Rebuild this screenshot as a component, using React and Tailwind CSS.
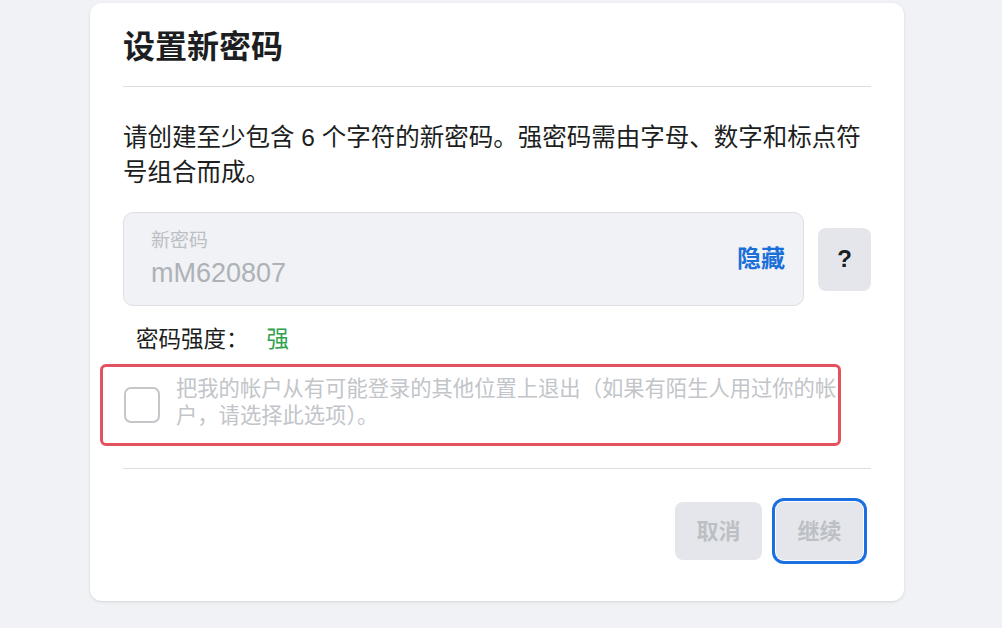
export default function App() {
  const font = { fontFamily: '"Liberation Sans","Noto Sans CJK SC",sans-serif' };
  return (
    <div className="w-[1002px] h-[628px] bg-[#f0f2f5] overflow-hidden" style={font}>
      <div className="ml-[90px] mt-[3px] w-[814px] h-[598px] bg-white rounded-[12px] shadow-[0_1px_3px_rgba(0,0,0,0.12)] px-[33px] pt-[22px] flex flex-col">
        <h1 className="text-[32px] leading-[44px] font-bold text-[#1c1e21]">设置新密码</h1>
        <div className="mt-[17px] h-px bg-[#dadde1]" />
        <p className="mt-[33px] text-[24.5px] leading-[35px] text-[#1c1e21] whitespace-nowrap">
          请创建至少包含 6 个字符的新密码。强密码需由字母、数字和标点符
          <br />
          号组合而成。
        </p>
        <div className="mt-[22px] flex items-center gap-[14px]">
          <div className="w-[681px] h-[94px] rounded-[10px] bg-[#f0f2f5] border border-[#dddfe2] flex items-center pl-[27px] pr-[18px]">
            <div className="flex-1 flex flex-col">
              <span className="text-[19px] leading-[22px] text-[#bcc0c4]">新密码</span>
              <span className="mt-[6px] text-[27px] leading-[30px] text-[#aeb1b5]">mM620807</span>
            </div>
            <span className="text-[24px] font-bold text-[#1a6fd9]">隐藏</span>
          </div>
          <div className="w-[53px] h-[63px] rounded-[8px] bg-[#e4e6eb] flex items-center justify-center text-[24px] font-bold text-[#1c1e21]">?</div>
        </div>
        <div className="mt-[19px] ml-[13px] flex items-center h-[30px] text-[22.5px]">
          <span className="text-[#1c1e21]">密码强度：</span>
          <span className="ml-[18px] text-[#31a24c]">强</span>
        </div>
        <div className="mt-[9px] ml-[-23px] w-[741px] h-[82px] border-[3px] border-[#e4525f] rounded-[6px] flex items-center pl-[21px] pr-[2px]">
          <div className="w-[36px] h-[36px] rounded-[7px] border-2 border-[#c4c6ca] shrink-0" />
          <p className="ml-[16px] text-[21.3px] leading-[27px] text-[#c2c5c9] whitespace-nowrap -mt-[4px]">
            把我的帐户从有可能登录的其他位置上退出（如果有陌生人用过你的帐
            <br />
            户，请选择此选项）。
          </p>
        </div>
        <div className="mt-[22px] h-px bg-[#dadde1]" />
        <div className="mt-[33px] mr-[8px] flex justify-end gap-[14px]">
          <div className="w-[87px] h-[58px] rounded-[8px] bg-[#e4e6eb] flex items-center justify-center text-[22px] font-bold text-[#bcc0c4]">取消</div>
          <div className="w-[87px] h-[58px] rounded-[8px] bg-[#e4e6eb] flex items-center justify-center text-[22px] font-bold text-[#bcc0c4] ring-[3px] ring-[#1b6fe0] ring-offset-1">继续</div>
        </div>
      </div>
    </div>
  );
}
